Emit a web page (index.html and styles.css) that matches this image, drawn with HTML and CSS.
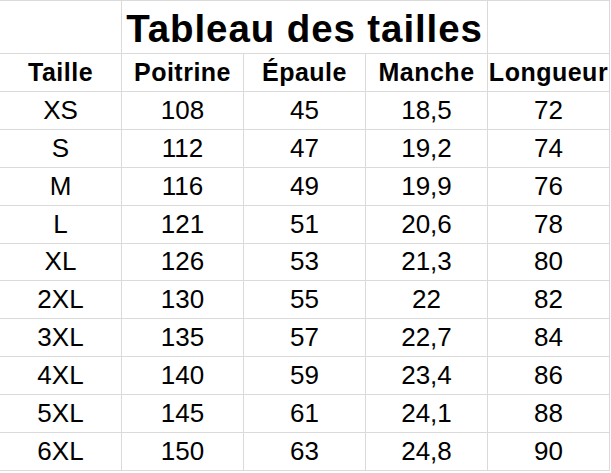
FILE: index.html
```html
<!DOCTYPE html>
<html lang="fr">
<head>
<meta charset="utf-8">
<title>Tableau des tailles</title>
<link rel="stylesheet" href="styles.css">
</head>
<body>
<div class="sheet">
  <div class="cell title-side"></div>
  <div class="cell title">Tableau des tailles</div>
  <div class="cell title-side"></div>

  <div class="cell head">Taille</div>
  <div class="cell head">Poitrine</div>
  <div class="cell head">Épaule</div>
  <div class="cell head">Manche</div>
  <div class="cell head">Longueur</div>

  <div class="cell">XS</div><div class="cell">108</div><div class="cell">45</div><div class="cell">18,5</div><div class="cell">72</div>
  <div class="cell">S</div><div class="cell">112</div><div class="cell">47</div><div class="cell">19,2</div><div class="cell">74</div>
  <div class="cell">M</div><div class="cell">116</div><div class="cell">49</div><div class="cell">19,9</div><div class="cell">76</div>
  <div class="cell">L</div><div class="cell">121</div><div class="cell">51</div><div class="cell">20,6</div><div class="cell">78</div>
  <div class="cell">XL</div><div class="cell">126</div><div class="cell">53</div><div class="cell">21,3</div><div class="cell">80</div>
  <div class="cell">2XL</div><div class="cell">130</div><div class="cell">55</div><div class="cell">22</div><div class="cell">82</div>
  <div class="cell">3XL</div><div class="cell">135</div><div class="cell">57</div><div class="cell">22,7</div><div class="cell">84</div>
  <div class="cell">4XL</div><div class="cell">140</div><div class="cell">59</div><div class="cell">23,4</div><div class="cell">86</div>
  <div class="cell">5XL</div><div class="cell">145</div><div class="cell">61</div><div class="cell">24,1</div><div class="cell">88</div>
  <div class="cell">6XL</div><div class="cell">150</div><div class="cell">63</div><div class="cell">24,8</div><div class="cell">90</div>
</div>
</body>
</html>
```

FILE: styles.css
```css
html, body {
  margin: 0;
  padding: 0;
  background: #ffffff;
}

body {
  font-family: "Liberation Sans", Arial, sans-serif;
  color: #000000;
}

.sheet {
  display: grid;
  grid-template-columns: repeat(5, 122px);
  grid-template-rows: 53px 38px repeat(10, 37.9px);
  width: 610px;
  border-top: 1px solid #dadada;
}

.cell {
  display: flex;
  align-items: flex-end;
  justify-content: center;
  border-right: 1px solid #dadada;
  border-bottom: 1px solid #dadada;
  font-size: 26px;
  line-height: 1;
  padding-bottom: 6px;
  box-sizing: border-box;
  white-space: nowrap;
}

.title {
  grid-column: span 3;
  font-size: 38.5px;
  font-weight: bold;
  letter-spacing: 0.9px;
  padding-bottom: 5px;
}

.head {
  font-size: 25px;
  font-weight: bold;
  letter-spacing: 0.5px;
  padding-bottom: 6px;
}
```
